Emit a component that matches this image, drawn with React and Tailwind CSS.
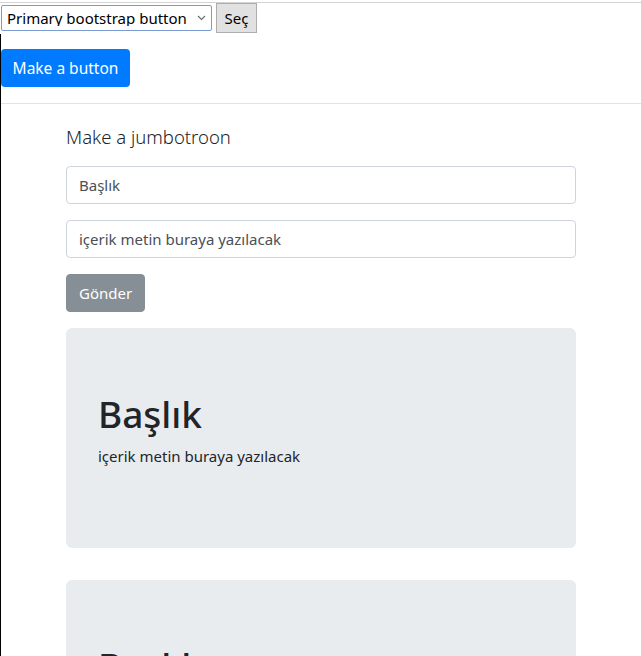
import { useState } from "react";

const FONT = { fontFamily: '"Segoe UI", "Noto Sans", "Open Sans", Arial, sans-serif' };

function Jumbotron({ title, text }) {
  return (
    <div className="bg-[#e9ecef] rounded-md px-8 py-16 mb-8">
      <h1 className="text-[37px] leading-[44px] font-medium text-[#212529] mb-2">{title}</h1>
      <p className="text-[15px] leading-6 text-[#212529] mb-4">{text}</p>
    </div>
  );
}

export default function App() {
  const [choice, setChoice] = useState("primary");
  const [title, setTitle] = useState("Başlık");
  const [body, setBody] = useState("içerik metin buraya yazılacak");

  const items = [
    { title: "Başlık", text: "içerik metin buraya yazılacak" },
    { title: "Başlık", text: "içerik metin buraya yazılacak" },
  ];

  return (
    <div className="min-h-screen bg-white text-[#212529] overflow-hidden" style={FONT}>
      <div className="h-[3px] border-b border-[#d4d4d4]"></div>

      {/* Select row */}
      <div className="flex items-start gap-[4px] h-[31px] pl-[1px]">
        <div className="relative mt-[2px]">
          <select
            value={choice}
            onChange={(e) => setChoice(e.target.value)}
            className="appearance-none w-[211px] h-[26px] border border-[#7a9cd3] rounded-[2px] bg-white pl-[5px] pr-6 text-[15px] leading-none text-black outline-none"
          >
            <option value="primary">Primary bootstrap button</option>
            <option value="secondary">Secondary bootstrap button</option>
          </select>
          <svg className="absolute right-[6px] top-[10px] pointer-events-none" width="9" height="6" viewBox="0 0 9 6" fill="none">
            <path d="M1 1l3.5 3.5L8 1" stroke="#6d6d6d" strokeWidth="1.2" />
          </svg>
        </div>
        <button className="h-[30px] w-[41px] bg-[#e1e1e1] border border-[#adadad] text-[15px] text-black leading-none">
          Seç
        </button>
      </div>

      <div className="border-l border-black min-h-[640px]">
        <div className="pt-[15px] pb-4">
          <button className="bg-[#007bff] text-white text-[15.5px] leading-6 w-[129px] py-[7px] rounded-[4px]">
            Make a button
          </button>
        </div>

        <hr className="border-t border-[#e3e3e3]" />

        {/* Jumbotron form */}
        <div className="w-[510px] mx-auto pt-[21px]">
          <h5 className="text-[18.5px] font-light leading-6 text-[#212529] mb-[17px]">Make a jumbotroon</h5>
          <input
            value={title}
            onChange={(e) => setTitle(e.target.value)}
            className="block w-full h-[38px] px-3 border border-[#ced4da] rounded-[4px] text-[15px] text-[#495057] outline-none mb-4"
          />
          <input
            value={body}
            onChange={(e) => setBody(e.target.value)}
            className="block w-full h-[38px] px-3 border border-[#ced4da] rounded-[4px] text-[15px] text-[#495057] outline-none mb-4"
          />
          <button className="bg-[#868e96] text-white text-[15px] leading-6 px-3 py-[6px] rounded-[4px] border border-[#868e96] mb-4">
            Gönder
          </button>

          {items.map((item, i) => (
            <Jumbotron key={i} title={item.title} text={item.text} />
          ))}
        </div>
      </div>
    </div>
  );
}
